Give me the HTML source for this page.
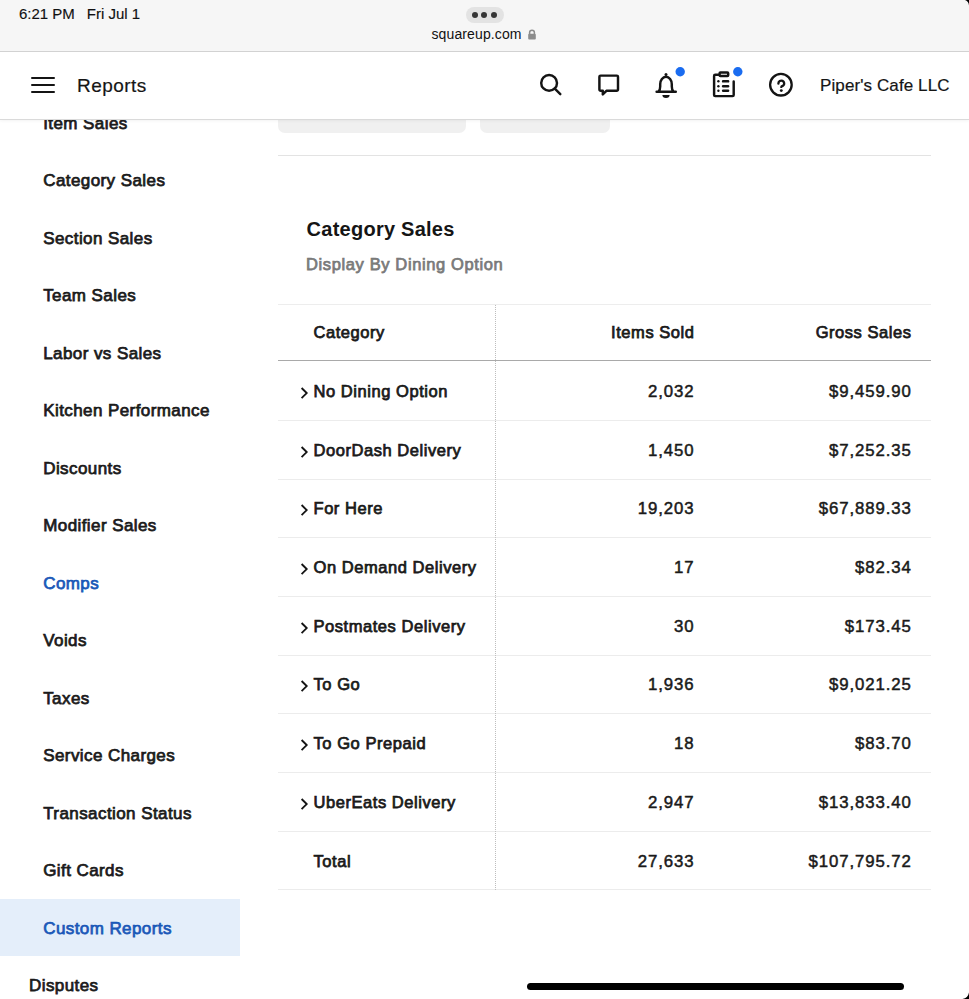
<!DOCTYPE html><html><head><meta charset="utf-8"><style>
html,body{margin:0;padding:0;}
body{width:969px;height:999px;overflow:hidden;position:relative;background:#fff;font-family:"Liberation Sans",sans-serif;}
.t{position:absolute;white-space:nowrap;line-height:normal;}
#status{position:absolute;left:0;top:0;width:969px;height:51px;background:#f6f6f6;border-bottom:1px solid #d2d2d2;}
#pill{position:absolute;left:465.5px;top:7px;width:38px;height:15.5px;border-radius:8px;background:#e3e3e3;}
#pill i{position:absolute;top:4.8px;width:6px;height:6px;border-radius:50%;background:#363636;}
#header{position:absolute;left:0;top:52px;width:969px;height:67px;background:#fff;box-shadow:0 1px 0 #dadada,0 2px 3px rgba(0,0,0,0.05);}
.hb{position:absolute;left:31.3px;width:23.7px;height:2.1px;background:#141414;border-radius:1px;}
#hl{position:absolute;left:0;top:899.3px;width:240px;height:57px;background:#e4eefa;}
.tab{position:absolute;top:100px;height:33px;background:#f0f0f0;border-radius:0 0 7px 7px;}
.hr{position:absolute;left:278px;width:653px;height:1px;}
#vdiv{position:absolute;left:494.7px;top:305px;height:585px;width:0;border-left:1px dotted #bdbdbd;}
.chev{position:absolute;}
#home{position:absolute;left:526.6px;top:983px;width:377px;height:7px;border-radius:3.5px;background:#000;}
</style></head><body>
<div id="hl"></div><div class="t" style="left:43.2px;top:114px;font-size:17px;font-weight:normal;-webkit-text-stroke:0.75px #1b1b1b;color:#1b1b1b;letter-spacing:0.42px;">Item Sales</div>
<div class="t" style="left:43.2px;top:171px;font-size:17px;font-weight:normal;-webkit-text-stroke:0.75px #1b1b1b;color:#1b1b1b;letter-spacing:0.42px;">Category Sales</div>
<div class="t" style="left:43.2px;top:229px;font-size:17px;font-weight:normal;-webkit-text-stroke:0.75px #1b1b1b;color:#1b1b1b;letter-spacing:0.42px;">Section Sales</div>
<div class="t" style="left:43.2px;top:286px;font-size:17px;font-weight:normal;-webkit-text-stroke:0.75px #1b1b1b;color:#1b1b1b;letter-spacing:0.42px;">Team Sales</div>
<div class="t" style="left:43.2px;top:344px;font-size:17px;font-weight:normal;-webkit-text-stroke:0.75px #1b1b1b;color:#1b1b1b;letter-spacing:0.42px;">Labor vs Sales</div>
<div class="t" style="left:43.2px;top:401px;font-size:17px;font-weight:normal;-webkit-text-stroke:0.75px #1b1b1b;color:#1b1b1b;letter-spacing:0.42px;">Kitchen Performance</div>
<div class="t" style="left:43.2px;top:459px;font-size:17px;font-weight:normal;-webkit-text-stroke:0.75px #1b1b1b;color:#1b1b1b;letter-spacing:0.42px;">Discounts</div>
<div class="t" style="left:43.2px;top:516px;font-size:17px;font-weight:normal;-webkit-text-stroke:0.75px #1b1b1b;color:#1b1b1b;letter-spacing:0.42px;">Modifier Sales</div>
<div class="t" style="left:43.2px;top:574px;font-size:17px;font-weight:normal;-webkit-text-stroke:0.75px #1a58b8;color:#1a58b8;letter-spacing:0.42px;">Comps</div>
<div class="t" style="left:43.2px;top:631px;font-size:17px;font-weight:normal;-webkit-text-stroke:0.75px #1b1b1b;color:#1b1b1b;letter-spacing:0.42px;">Voids</div>
<div class="t" style="left:43.2px;top:689px;font-size:17px;font-weight:normal;-webkit-text-stroke:0.75px #1b1b1b;color:#1b1b1b;letter-spacing:0.42px;">Taxes</div>
<div class="t" style="left:43.2px;top:746px;font-size:17px;font-weight:normal;-webkit-text-stroke:0.75px #1b1b1b;color:#1b1b1b;letter-spacing:0.42px;">Service Charges</div>
<div class="t" style="left:43.2px;top:804px;font-size:17px;font-weight:normal;-webkit-text-stroke:0.75px #1b1b1b;color:#1b1b1b;letter-spacing:0.42px;">Transaction Status</div>
<div class="t" style="left:43.2px;top:861px;font-size:17px;font-weight:normal;-webkit-text-stroke:0.75px #1b1b1b;color:#1b1b1b;letter-spacing:0.42px;">Gift Cards</div>
<div class="t" style="left:43.2px;top:919px;font-size:17px;font-weight:normal;-webkit-text-stroke:0.75px #1a58b8;color:#1a58b8;letter-spacing:0.42px;">Custom Reports</div>
<div class="t" style="left:29px;top:976px;font-size:17px;font-weight:normal;-webkit-text-stroke:0.75px #1b1b1b;color:#1b1b1b;letter-spacing:0.42px;">Disputes</div>
<div class="tab" style="left:278px;width:188px"></div><div class="tab" style="left:480px;width:130px"></div><div class="hr" style="top:155px;left:278px;width:653px;background:#e3e3e3"></div><div class="t" style="left:306.6px;top:218px;font-size:20px;font-weight:700;color:#151515;letter-spacing:0.25px;">Category Sales</div>
<div class="t" style="left:306px;top:255px;font-size:16.5px;font-weight:normal;-webkit-text-stroke:0.75px #7a7a7a;color:#7a7a7a;letter-spacing:0.62px;">Display By Dining Option</div>
<div class="hr" style="top:304px;background:#ededed"></div><div class="hr" style="top:360px;background:#a9a9a9"></div><div class="t" style="left:313.5px;top:323px;font-size:16.5px;font-weight:normal;-webkit-text-stroke:0.75px #1a1a1a;color:#1a1a1a;letter-spacing:0.55px;">Category</div>
<div class="t" style="right:275px;text-align:right;top:323px;font-size:16.5px;font-weight:normal;-webkit-text-stroke:0.75px #1a1a1a;color:#1a1a1a;letter-spacing:0.55px;margin-right:-0.55px;">Items Sold</div>
<div class="t" style="right:58px;text-align:right;top:323px;font-size:16.5px;font-weight:normal;-webkit-text-stroke:0.75px #1a1a1a;color:#1a1a1a;letter-spacing:0.55px;margin-right:-0.55px;">Gross Sales</div>
<svg class="chev" style="left:300px;top:386.80px" width="9" height="13" viewBox="0 0 9 13"><path d="M1.6 1L6.7 6.1L1.6 11.2" fill="none" stroke="#141414" stroke-width="1.85"/></svg><div class="t" style="left:313.5px;top:382px;font-size:16.5px;font-weight:normal;-webkit-text-stroke:0.75px #1a1a1a;color:#1a1a1a;letter-spacing:0.55px;">No Dining Option</div>
<div class="t" style="right:275.4px;text-align:right;top:382px;font-size:16.8px;font-weight:normal;-webkit-text-stroke:0.5px #1a1a1a;color:#1a1a1a;letter-spacing:0.9px;margin-right:-0.9px;">2,032</div>
<div class="t" style="right:58.200000000000045px;text-align:right;top:382px;font-size:16.8px;font-weight:normal;-webkit-text-stroke:0.5px #1a1a1a;color:#1a1a1a;letter-spacing:0.9px;margin-right:-0.9px;">$9,459.90</div>
<div class="hr" style="top:419.80px;background:#ececec"></div><svg class="chev" style="left:300px;top:445.50px" width="9" height="13" viewBox="0 0 9 13"><path d="M1.6 1L6.7 6.1L1.6 11.2" fill="none" stroke="#141414" stroke-width="1.85"/></svg><div class="t" style="left:313.5px;top:441px;font-size:16.5px;font-weight:normal;-webkit-text-stroke:0.75px #1a1a1a;color:#1a1a1a;letter-spacing:0.55px;">DoorDash Delivery</div>
<div class="t" style="right:275.4px;text-align:right;top:441px;font-size:16.8px;font-weight:normal;-webkit-text-stroke:0.5px #1a1a1a;color:#1a1a1a;letter-spacing:0.9px;margin-right:-0.9px;">1,450</div>
<div class="t" style="right:58.200000000000045px;text-align:right;top:441px;font-size:16.8px;font-weight:normal;-webkit-text-stroke:0.5px #1a1a1a;color:#1a1a1a;letter-spacing:0.9px;margin-right:-0.9px;">$7,252.35</div>
<div class="hr" style="top:478.50px;background:#ececec"></div><svg class="chev" style="left:300px;top:504.20px" width="9" height="13" viewBox="0 0 9 13"><path d="M1.6 1L6.7 6.1L1.6 11.2" fill="none" stroke="#141414" stroke-width="1.85"/></svg><div class="t" style="left:313.5px;top:499px;font-size:16.5px;font-weight:normal;-webkit-text-stroke:0.75px #1a1a1a;color:#1a1a1a;letter-spacing:0.55px;">For Here</div>
<div class="t" style="right:275.4px;text-align:right;top:499px;font-size:16.8px;font-weight:normal;-webkit-text-stroke:0.5px #1a1a1a;color:#1a1a1a;letter-spacing:0.9px;margin-right:-0.9px;">19,203</div>
<div class="t" style="right:58.200000000000045px;text-align:right;top:499px;font-size:16.8px;font-weight:normal;-webkit-text-stroke:0.5px #1a1a1a;color:#1a1a1a;letter-spacing:0.9px;margin-right:-0.9px;">$67,889.33</div>
<div class="hr" style="top:537.20px;background:#ececec"></div><svg class="chev" style="left:300px;top:562.90px" width="9" height="13" viewBox="0 0 9 13"><path d="M1.6 1L6.7 6.1L1.6 11.2" fill="none" stroke="#141414" stroke-width="1.85"/></svg><div class="t" style="left:313.5px;top:558px;font-size:16.5px;font-weight:normal;-webkit-text-stroke:0.75px #1a1a1a;color:#1a1a1a;letter-spacing:0.55px;">On Demand Delivery</div>
<div class="t" style="right:275.4px;text-align:right;top:558px;font-size:16.8px;font-weight:normal;-webkit-text-stroke:0.5px #1a1a1a;color:#1a1a1a;letter-spacing:0.9px;margin-right:-0.9px;">17</div>
<div class="t" style="right:58.200000000000045px;text-align:right;top:558px;font-size:16.8px;font-weight:normal;-webkit-text-stroke:0.5px #1a1a1a;color:#1a1a1a;letter-spacing:0.9px;margin-right:-0.9px;">$82.34</div>
<div class="hr" style="top:595.90px;background:#ececec"></div><svg class="chev" style="left:300px;top:621.60px" width="9" height="13" viewBox="0 0 9 13"><path d="M1.6 1L6.7 6.1L1.6 11.2" fill="none" stroke="#141414" stroke-width="1.85"/></svg><div class="t" style="left:313.5px;top:617px;font-size:16.5px;font-weight:normal;-webkit-text-stroke:0.75px #1a1a1a;color:#1a1a1a;letter-spacing:0.55px;">Postmates Delivery</div>
<div class="t" style="right:275.4px;text-align:right;top:617px;font-size:16.8px;font-weight:normal;-webkit-text-stroke:0.5px #1a1a1a;color:#1a1a1a;letter-spacing:0.9px;margin-right:-0.9px;">30</div>
<div class="t" style="right:58.200000000000045px;text-align:right;top:617px;font-size:16.8px;font-weight:normal;-webkit-text-stroke:0.5px #1a1a1a;color:#1a1a1a;letter-spacing:0.9px;margin-right:-0.9px;">$173.45</div>
<div class="hr" style="top:654.60px;background:#ececec"></div><svg class="chev" style="left:300px;top:680.30px" width="9" height="13" viewBox="0 0 9 13"><path d="M1.6 1L6.7 6.1L1.6 11.2" fill="none" stroke="#141414" stroke-width="1.85"/></svg><div class="t" style="left:313.5px;top:675px;font-size:16.5px;font-weight:normal;-webkit-text-stroke:0.75px #1a1a1a;color:#1a1a1a;letter-spacing:0.55px;">To Go</div>
<div class="t" style="right:275.4px;text-align:right;top:675px;font-size:16.8px;font-weight:normal;-webkit-text-stroke:0.5px #1a1a1a;color:#1a1a1a;letter-spacing:0.9px;margin-right:-0.9px;">1,936</div>
<div class="t" style="right:58.200000000000045px;text-align:right;top:675px;font-size:16.8px;font-weight:normal;-webkit-text-stroke:0.5px #1a1a1a;color:#1a1a1a;letter-spacing:0.9px;margin-right:-0.9px;">$9,021.25</div>
<div class="hr" style="top:713.30px;background:#ececec"></div><svg class="chev" style="left:300px;top:739.00px" width="9" height="13" viewBox="0 0 9 13"><path d="M1.6 1L6.7 6.1L1.6 11.2" fill="none" stroke="#141414" stroke-width="1.85"/></svg><div class="t" style="left:313.5px;top:734px;font-size:16.5px;font-weight:normal;-webkit-text-stroke:0.75px #1a1a1a;color:#1a1a1a;letter-spacing:0.55px;">To Go Prepaid</div>
<div class="t" style="right:275.4px;text-align:right;top:734px;font-size:16.8px;font-weight:normal;-webkit-text-stroke:0.5px #1a1a1a;color:#1a1a1a;letter-spacing:0.9px;margin-right:-0.9px;">18</div>
<div class="t" style="right:58.200000000000045px;text-align:right;top:734px;font-size:16.8px;font-weight:normal;-webkit-text-stroke:0.5px #1a1a1a;color:#1a1a1a;letter-spacing:0.9px;margin-right:-0.9px;">$83.70</div>
<div class="hr" style="top:772.00px;background:#ececec"></div><svg class="chev" style="left:300px;top:797.70px" width="9" height="13" viewBox="0 0 9 13"><path d="M1.6 1L6.7 6.1L1.6 11.2" fill="none" stroke="#141414" stroke-width="1.85"/></svg><div class="t" style="left:313.5px;top:793px;font-size:16.5px;font-weight:normal;-webkit-text-stroke:0.75px #1a1a1a;color:#1a1a1a;letter-spacing:0.55px;">UberEats Delivery</div>
<div class="t" style="right:275.4px;text-align:right;top:793px;font-size:16.8px;font-weight:normal;-webkit-text-stroke:0.5px #1a1a1a;color:#1a1a1a;letter-spacing:0.9px;margin-right:-0.9px;">2,947</div>
<div class="t" style="right:58.200000000000045px;text-align:right;top:793px;font-size:16.8px;font-weight:normal;-webkit-text-stroke:0.5px #1a1a1a;color:#1a1a1a;letter-spacing:0.9px;margin-right:-0.9px;">$13,833.40</div>
<div class="hr" style="top:830.70px;background:#ececec"></div><div class="t" style="left:313.5px;top:852px;font-size:16.5px;font-weight:normal;-webkit-text-stroke:0.75px #1a1a1a;color:#1a1a1a;letter-spacing:0.55px;">Total</div>
<div class="t" style="right:275.4px;text-align:right;top:852px;font-size:16.8px;font-weight:normal;-webkit-text-stroke:0.5px #1a1a1a;color:#1a1a1a;letter-spacing:0.9px;margin-right:-0.9px;">27,633</div>
<div class="t" style="right:58.200000000000045px;text-align:right;top:852px;font-size:16.8px;font-weight:normal;-webkit-text-stroke:0.5px #1a1a1a;color:#1a1a1a;letter-spacing:0.9px;margin-right:-0.9px;">$107,795.72</div>
<div class="hr" style="top:889.40px;background:#ececec"></div><div id="vdiv"></div><div id="status"></div><div class="t" style="left:19px;top:5px;font-size:15px;font-weight:normal;color:#111;-webkit-text-stroke:0.15px #111;">6:21 PM</div>
<div class="t" style="left:86.8px;top:5px;font-size:15px;font-weight:normal;color:#111;-webkit-text-stroke:0.15px #111;">Fri Jul 1</div>
<div id="pill"><i style="left:6px"></i><i style="left:15.5px"></i><i style="left:25px"></i></div><div class="t" style="left:431.5px;top:26px;font-size:14px;font-weight:normal;color:#111;letter-spacing:0.12px;">squareup.com</div>
<svg style="position:absolute;left:527px;top:29px" width="10" height="11" viewBox="0 0 10 11"><path d="M2.6 5V3.6a2.4 2.4 0 0 1 4.8 0V5" fill="none" stroke="#8c8c8c" stroke-width="1.5"/><rect x="1.2" y="4.8" width="7.6" height="5.8" rx="1" fill="#8c8c8c"/></svg><div id="header"></div><div class="hb" style="top:76.8px"></div><div class="hb" style="top:83.9px"></div><div class="hb" style="top:91.1px"></div><div class="t" style="left:77px;top:75px;font-size:19px;font-weight:normal;color:#151515;letter-spacing:0.45px;-webkit-text-stroke:0.2px #151515;">Reports</div>
<div class="t" style="right:19.5px;text-align:right;top:76px;font-size:17px;font-weight:normal;color:#151515;letter-spacing:0.1px;margin-right:-0.1px;-webkit-text-stroke:0.2px #151515;">Piper's Cafe LLC</div>

<svg style="position:absolute;left:0;top:0" width="969" height="120">
 <g fill="none" stroke="#141414" stroke-width="2.45" stroke-linecap="round" stroke-linejoin="round">
  <circle cx="549.1" cy="82.9" r="7.9"/>
  <line x1="554.8" y1="88.6" x2="560.3" y2="94.1"/>
  <path d="M600.6 75.6h16.2a1.2 1.2 0 0 1 1.2 1.2v12.8a1.2 1.2 0 0 1 -1.2 1.2h-10.4l-3.6 3.6v-3.6h-2.2a1.2 1.2 0 0 1 -1.2 -1.2v-12.8a1.2 1.2 0 0 1 1.2 -1.2z"/>
  <path d="M656.6 91.8h19.2M658.4 91.8c1.5-1.3 1.8-2.8 1.8-5.4v-2.2c0-4.2 2.6-7.4 5.8-7.4s5.8 3.2 5.8 7.4v2.2c0 2.6 .3 4.1 1.8 5.4"/>
  
  <path d="M718.5 74.8h-3.3a1.1 1.1 0 0 0 -1.1 1.1v19.1a1.1 1.1 0 0 0 1.1 1.1h17.4a1.1 1.1 0 0 0 1.1 -1.1v-13.5"/>
  <rect x="719.6" y="72.4" width="8.6" height="3.6" rx="0.8"/>
 </g>
 <circle cx="666" cy="74.6" r="1.5" fill="#141414"/><path d="M662.4 95h7.2a3.6 2.9 0 0 1 -7.2 0z" fill="#141414"/>
 <g fill="#141414">
  <circle cx="718.4" cy="81.3" r="1.2"/><circle cx="718.4" cy="86.2" r="1.2"/><circle cx="718.4" cy="90.7" r="1.2"/>
  <rect x="721.9" y="80.0" width="7.4" height="2.6" rx="1.2"/><rect x="721.9" y="84.9" width="7.4" height="2.6" rx="1.2"/><rect x="721.9" y="89.4" width="7.4" height="2.6" rx="1.2"/>
 </g>
 <circle cx="780.9" cy="84.7" r="10.8" fill="none" stroke="#141414" stroke-width="2.3"/>
 <path d="M778.4 83.5A2.9 2.9 0 1 1 783.16 85.72Q781.3 86.3 781.3 86.9" fill="none" stroke="#141414" stroke-width="2.35" stroke-linecap="round"/>
 <circle cx="781.3" cy="90.6" r="1.45" fill="#141414"/>
 <circle cx="680.2" cy="71.8" r="4.7" fill="#1a6cf0"/>
 <circle cx="737.8" cy="71.8" r="4.7" fill="#1a6cf0"/>
</svg>
<div id="home"></div><svg style="position:absolute;left:0;top:0" width="969" height="999"><path d="M965 0Q968.6 1 969 5.6V0Z" fill="#000"/><path d="M969 992.5Q968 998.2 962.5 999H969Z" fill="#000"/></svg>
</body></html>
